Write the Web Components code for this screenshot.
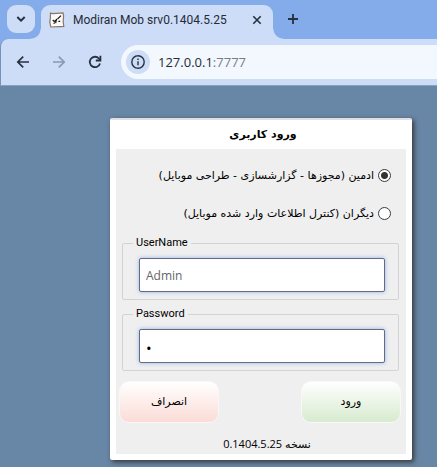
<!DOCTYPE html>
<html lang="fa">
<head>
<meta charset="utf-8">
<meta name="viewport" content="width=device-width, initial-scale=1">
<title>Modiran Mob srv0.1404.5.25</title>
<style>
  html, body { height: 100%; }
  body {
    margin: 0;
    display: flex;
    flex-direction: column;
    overflow: hidden;
    background: #6886a5;
    font-family: "Open Sans", "DejaVu Sans", sans-serif;
    color: #000;
  }
</style>
</head>
<body>

<browser-tabs tab-title="Modiran Mob srv0.1404.5.25"></browser-tabs>
<browser-toolbar host="127.0.0.1" port=":7777"></browser-toolbar>

<login-dialog dialog-title="ورود کاربری">
  <role-option name="role" label="ادمین (مجوزها - گزارشسازی - طراحی موبایل)" checked></role-option>
  <role-option name="role" label="دیگران (کنترل اطلاعات وارد شده موبایل)"></role-option>
  <field-box label="UserName" type="text" value="Admin"></field-box>
  <field-box label="Password" type="password" value="1"></field-box>
  <action-button slot="actions" variant="login">ورود</action-button>
  <action-button slot="actions" variant="cancel">انصراف</action-button>
  <span slot="version">نسخه 0.1404.5.25</span>
</login-dialog>

<script>
"use strict";

(function () {
  /* ── Base: clones a template string into an open shadow root ── */
  class BaseElement extends HTMLElement {
    connectedCallback() {
      if (this.shadowRoot) return;
      var tpl = document.createElement("template");
      tpl.innerHTML = this.template();
      this.attachShadow({ mode: "open" }).appendChild(tpl.content.cloneNode(true));
    }
    attr(name) { return this.getAttribute(name) || ""; }
  }

  /* ── Tab strip ─────────────────────────────────────────────── */
  class BrowserTabs extends BaseElement {
    template() {
      return `
        <style>
          :host {
            display: flex;
            align-items: flex-end;
            flex: none;
            height: 39px;
            padding-left: 7px;
            box-sizing: border-box;
            background: #85acea;
          }
          button {
            display: flex;
            align-items: center;
            justify-content: center;
            flex: none;
            padding: 0;
            border: 0;
            background: none;
            color: #26303f;
          }
          .search {
            width: 28px;
            height: 28px;
            margin: 0 6px 6px 0;
            border-radius: 9px;
            background: #cddcf7;
          }
          .tab {
            display: flex;
            align-items: center;
            position: relative;
            width: 232px;
            height: 34px;
            padding: 0 9px 4px 8px;
            box-sizing: border-box;
            border-radius: 9px 9px 0 0;
            background: #cddcf7;
          }
          .tab::before, .tab::after {
            content: '';
            position: absolute;
            bottom: 0;
            width: 10px;
            height: 10px;
          }
          .tab::before { right: 100%; background: radial-gradient(circle at 0 0, transparent 9px, #cddcf7 10px); }
          .tab::after  { left: 100%;  background: radial-gradient(circle at 100% 0, transparent 9px, #cddcf7 10px); }
          .title {
            flex: 1;
            margin-left: 8px;
            font-family: Roboto, sans-serif;
            font-size: 12px;
            line-height: 16px;
            white-space: nowrap;
            color: #252b36;
          }
          .close { width: 14px; height: 16px; }
          .new { width: 16px; height: 16px; margin: 0 0 12px 12px; }
        </style>
        <button class="search" aria-label="Search tabs">
          <svg width="10" height="8" viewBox="0 0 10 8" fill="none" stroke="currentColor" stroke-width="2"><path d="M1.3 2 5 5.7 8.7 2"/></svg>
        </button>
        <div class="tab">
          <svg width="16" height="16" viewBox="0 0 16 16">
            <path d="M1.5 1.2 4 1.6 14 .8l.6 3-.4 6 .6 4.6-4 .2-9 .4L.8 10l.6-4z" fill="#fbfaf6" stroke="#85766a" stroke-width="1.2"/>
            <path d="M12 3.6 8.4 7.2M3.8 8l1.4 1.4 2-1.4M7.6 6.8 6.6 11M4.6 11.6l1.4-.8M9.4 9.4h1.8" fill="none" stroke="#151515" stroke-width="1.2"/>
          </svg>
          <span class="title">${this.attr("tab-title")}</span>
          <button class="close" aria-label="Close tab">
            <svg width="10" height="10" viewBox="0 0 10 10" stroke="currentColor" stroke-width="1.6"><path d="m1.3 1.3 7.4 7.4m0-7.4L1.3 8.7"/></svg>
          </button>
        </div>
        <button class="new" aria-label="New tab">
          <svg width="12" height="12" viewBox="0 0 12 12" stroke="currentColor" stroke-width="1.8"><path d="M6 1v10M1 6h10"/></svg>
        </button>
      `;
    }
  }

  /* ── Toolbar ───────────────────────────────────────────────── */
  class BrowserToolbar extends BaseElement {
    template() {
      return `
        <style>
          :host {
            display: block;
            flex: none;
            background: #85acea;
          }
          .bar {
            display: flex;
            align-items: center;
            height: 47px;
            padding-left: 14px;
            box-sizing: border-box;
            border-left: 1px solid #7593b8;
            border-bottom: 1px solid #88a2c2;
            border-top-left-radius: 8px;
            background: #cddcf7;
          }
          button {
            display: flex;
            align-items: center;
            justify-content: center;
            flex: none;
            width: 16px;
            height: 16px;
            margin-right: 20px;
            padding: 0;
            border: 0;
            background: none;
            color: #26303f;
          }
          button:disabled { color: #8b98af; }
          .address {
            display: flex;
            align-items: center;
            flex: 1;
            height: 34px;
            padding-left: 5px;
            border-radius: 17px 0 0 17px;
            background: #f3f7fe;
            margin-left: -2px;
          }
          .info {
            width: 24px;
            height: 24px;
            margin-right: 8px;
            border-radius: 50%;
            background: #cddcf7;
          }
          .url {
            outline: none;
            font-size: 13px;
            line-height: 20px;
            white-space: nowrap;
            color: #252b36;
          }
          .port { color: #737b87; }
        </style>
        <div class="bar">
          <button aria-label="Back">
            <svg width="14" height="14" viewBox="0 0 14 14" fill="none" stroke="currentColor" stroke-width="1.7"><path d="M13 7H2M7.2 1.6 1.8 7l5.4 5.4"/></svg>
          </button>
          <button aria-label="Forward" disabled>
            <svg width="14" height="14" viewBox="0 0 14 14" fill="none" stroke="currentColor" stroke-width="1.7"><path d="M1 7h11M6.8 1.6 12.2 7l-5.4 5.4"/></svg>
          </button>
          <button aria-label="Reload">
            <svg width="14" height="14" viewBox="0 0 14 14" fill="none" stroke="currentColor" stroke-width="1.8"><path d="M12 8.4A5.2 5.2 0 1 1 10.9 3.5L12.3 5"/><path d="M12.4.8v4.7H7.8"/></svg>
          </button>
          <div class="address">
            <button class="info" aria-label="Site information">
              <svg width="16" height="16" viewBox="0 0 16 16" fill="none" stroke="currentColor" stroke-width="1.4"><circle cx="8" cy="8" r="6.2"/><path d="M8 7.2v4M8 4.4v1.5"/></svg>
            </button>
            <div class="url" role="textbox" aria-label="Address" contenteditable="true" spellcheck="false">${this.attr("host")}<span class="port">${this.attr("port")}</span></div>
          </div>
        </div>
      `;
    }
  }

  /* ── Login dialog ──────────────────────────────────────────── */
  class LoginDialog extends BaseElement {
    template() {
      return `
        <style>
          :host {
            display: block;
            margin: 32px 25px 0 110px;
          }
          section {
            padding: 0 6px 6px;
            border-top: 2px solid #dfe0e4;
            border-radius: 2px;
            background: #fff;
            box-shadow: 2px 2px 5px rgba(45,40,35,0.85);
          }
          h1 {
            margin: 0;
            font-family: "DejaVu Sans", sans-serif;
            font-size: 11px;
            line-height: 29px;
            font-weight: bold;
            text-align: center;
            direction: rtl;
            padding-left: 4px;
          }
          form {
            display: flex;
            flex-direction: column;
            padding: 7px 6px 0;
            background: #efefef;
          }
          .actions {
            display: flex;
            justify-content: space-between;
            direction: rtl;
            margin: 7px -3px 0;
            padding-right: 2px;
          }
          .version {
            padding: 10px 0 0 12px;
            font-size: 11px;
            line-height: 21px;
            text-align: center;
            direction: rtl;
          }
        </style>
        <section role="dialog" aria-labelledby="title">
          <h1 id="title">${this.attr("dialog-title")}</h1>
          <form onsubmit="return false">
            <slot></slot>
            <div class="actions"><slot name="actions"></slot></div>
            <div class="version"><slot name="version"></slot></div>
          </form>
        </section>
      `;
    }
  }

  /* ── Radio row ─────────────────────────────────────────────── */
  class RoleOption extends BaseElement {
    template() {
      return `
        <style>
          :host { display: block; direction: rtl; }
          label {
            display: flex;
            align-items: center;
            gap: 4px;
            height: 38px;
            padding-right: 9px;
            font-family: "DejaVu Sans", sans-serif;
            font-size: 11px;
            white-space: nowrap;
          }
          input {
            appearance: none;
            flex: none;
            width: 13px;
            height: 13px;
            margin: 0;
            border: 1px solid #3c3c3c;
            border-radius: 50%;
            background: #fff;
          }
          input:checked { background: radial-gradient(circle, #333 3px, #fff 4px); }
        </style>
        <label>
          <input type="radio" name="${this.attr("name")}" ${this.hasAttribute("checked") ? "checked" : ""}>
          <span>${this.attr("label")}</span>
        </label>
      `;
    }
  }

  /* ── Framed text field ─────────────────────────────────────── */
  class FieldBox extends BaseElement {
    template() {
      return `
        <style>
          :host { display: block; padding-top: 3px; margin-right: 1px; }
          fieldset {
            min-width: 0;
            margin: 0 0 3px;
            padding: 7px 13px 7px 16px;
            border: 1px solid #d3d3d5;
            border-radius: 2px;
          }
          legend {
            margin-left: -6px;
            padding: 0 3px;
            font-family: Roboto, sans-serif;
            font-size: 11px;
            line-height: 16px;
          }
          input {
            display: block;
            width: 100%;
            height: 34px;
            padding: 0 6px;
            box-sizing: border-box;
            border: 1px solid #686b7e;
            border-radius: 2px;
            outline: none;
            background: #fff;
            box-shadow: 0 0 4px #8db4f3;
            font: 12px "Open Sans", sans-serif;
            color: #666;
          }
          input[type="password"] { padding-top: 4px; font-size: 15px; color: #000; }
        </style>
        <fieldset>
          <legend><label for="field">${this.attr("label")}</label></legend>
          <input id="field" type="${this.attr("type")}" value="${this.attr("value")}">
        </fieldset>
      `;
    }
  }

  /* ── Gradient button: login | cancel ───────────────────────── */
  class ActionButton extends BaseElement {
    template() {
      return `
        <style>
          :host { display: block; }
          button {
            display: block;
            width: 100px;
            height: 42px;
            padding: 0 0 2px;
            border: 1px solid #f8f8f8;
            border-radius: 10px;
            font: 11px "DejaVu Sans", sans-serif;
            color: #000;
          }
          :host([variant="login"]) button  { background: linear-gradient(#fff, #d6ebce); }
          :host([variant="cancel"]) button { background: linear-gradient(#fff, #fbdcd6); }
        </style>
        <button type="button"><slot></slot></button>
      `;
    }
  }

  customElements.define("browser-tabs", BrowserTabs);
  customElements.define("browser-toolbar", BrowserToolbar);
  customElements.define("login-dialog", LoginDialog);
  customElements.define("role-option", RoleOption);
  customElements.define("field-box", FieldBox);
  customElements.define("action-button", ActionButton);
})();
</script>
</body>
</html>
